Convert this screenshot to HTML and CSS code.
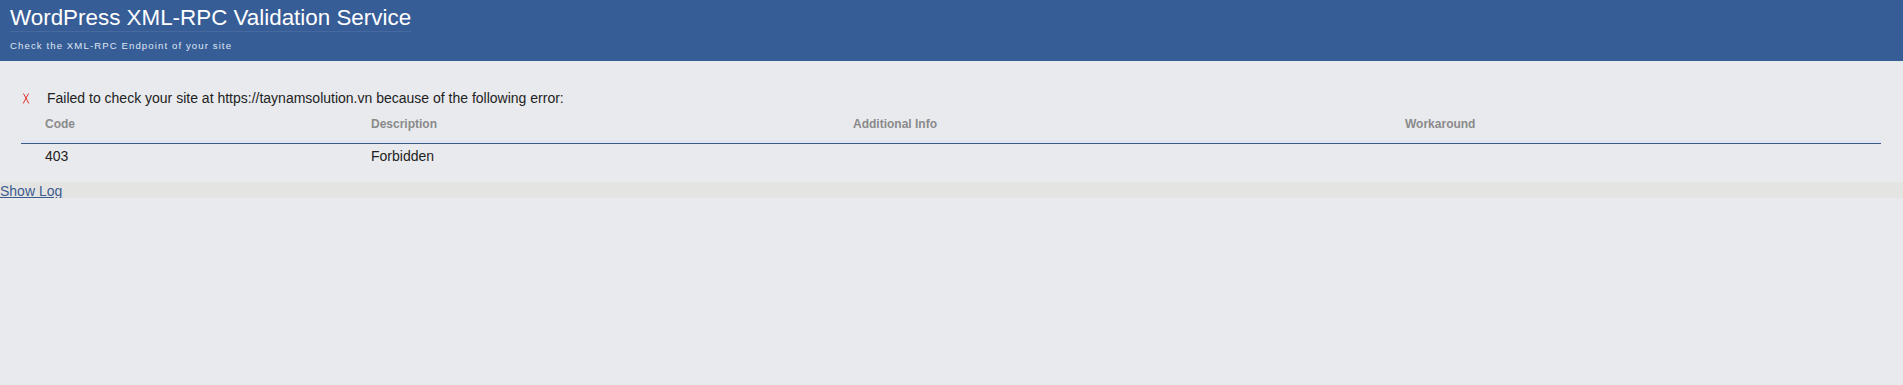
FILE: index.html
```html
<!DOCTYPE html>
<html lang="en">
<head>
    <meta charset="UTF-8">
    <meta name="viewport" content="width=device-width, initial-scale=1.0">
    <title>WordPress XML-RPC Validation Service</title>
    <link rel="stylesheet" href="styles.css">
</head>
<body>
    <div class="banner">
        <h1>WordPress XML-RPC Validation Service</h1>
        <p class="tagline">Check the XML-RPC Endpoint of your site</p>
    </div>

    <div class="result">
        <!-- Mensagem de erro -->
        <div class="error-line">
            <svg class="fail-icon" width="8" height="11" viewBox="0 0 8 11">
                <path d="M1.5 0.5 L6.8 10.5 M6.5 0.5 L1.2 10.5" stroke="#e0302a" stroke-width="1" fill="none"/>
            </svg>
            <span>Failed to check your site at https://taynamsolution.vn because of the following error:</span>
        </div>

        <div class="error-table">
            <div class="row head">
                <div class="cell">Code</div>
                <div class="cell">Description</div>
                <div class="cell">Additional Info</div>
                <div class="cell">Workaround</div>
            </div>
            <div class="row">
                <div class="cell">403</div>
                <div class="cell">Forbidden</div>
                <div class="cell"></div>
                <div class="cell"></div>
            </div>
        </div>
    </div>

    <div class="log-bar">
        <a href="#" class="show-log">Show Log</a>
    </div>
</body>
</html>
```

FILE: styles.css
```css
body {
    font-family: "Liberation Sans", Arial, sans-serif;
    background-color: #e9eaee;
    margin: 0;
    padding: 0;
    color: #222;
}

.banner {
    background-color: #375d97;
    height: 61px;
    padding: 5px 10px 0;
    box-sizing: border-box;
}

.banner h1 {
    display: inline-block;
    font-size: 22.4px;
    font-weight: normal;
    line-height: 26px;
    color: #fff;
    margin: 0;
    border-bottom: 1px solid rgba(255, 255, 255, 0.08);
}

.tagline {
    font-size: 9.6px;
    letter-spacing: 1.1px;
    color: #dfe6f2;
    margin: 8px 0 0;
    line-height: 11px;
}

.result {
    padding: 29px 22px 0 21px;
}

.error-line {
    display: flex;
    align-items: center;
    font-size: 14px;
    line-height: 16px;
}

.fail-icon {
    margin-left: 1px;
    margin-right: 17px;
    margin-top: 1px;
}

.row {
    display: grid;
    grid-template-columns: 326px 482px 552px 1fr;
    font-size: 14px;
    line-height: 16px;
}

.cell {
    padding-left: 24px;
}

.row.head {
    font-size: 12px;
    font-weight: bold;
    color: #8a8a8a;
    line-height: 14px;
    padding: 11px 0 9px;
    border-bottom: 1px solid #3d5a88;
    box-shadow: inset 0 -3px 0 #dfe5f1;
}

.row.head .cell {
    padding-bottom: 3px;
}

.row + .row {
    padding-top: 4px;
}

.log-bar {
    margin-top: 18px;
    background-color: #e4e5e3;
    height: 16px;
}

.show-log {
    font-size: 14px;
    line-height: 16px;
    color: #3b5b8f;
    text-decoration: underline;
}
```
